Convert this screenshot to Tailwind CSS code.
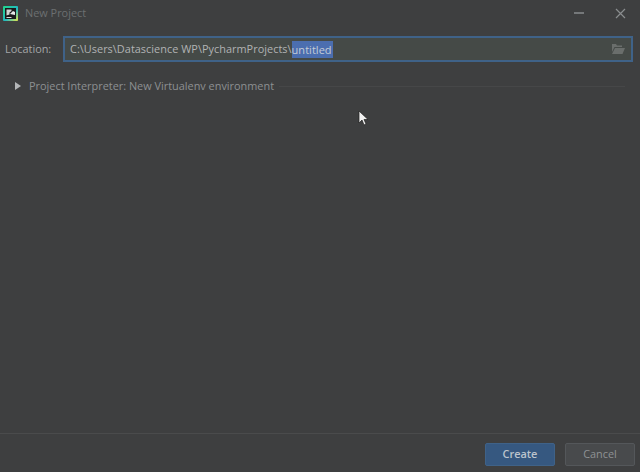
<!DOCTYPE html>
<html lang="en">
<head>
  <meta charset="UTF-8" />
  <title>New Project</title>
  <script src="https://cdn.jsdelivr.net/npm/@tailwindcss/browser@4"></script>
</head>
<body class="bg-[#3e3f40]">
  <div class="relative w-[640px] h-[472px] overflow-hidden flex flex-col bg-[#3e3f40] font-['Open_Sans','Liberation_Sans',sans-serif] text-[10.9px] text-[#a9abad]">

    <!-- title bar -->
    <div class="h-[26px] flex items-center shrink-0">
      <svg class="ml-[3px] mt-[1px] w-[15px] h-[15px]" viewBox="0 0 15 15">
        <defs>
          <linearGradient id="pc" x1="0" y1="0" x2="1" y2="1">
            <stop offset="0" stop-color="#21d789" />
            <stop offset="0.55" stop-color="#21b8c0" />
            <stop offset="1" stop-color="#e8e84a" />
          </linearGradient>
        </defs>
        <rect width="15" height="15" rx="1" fill="url(#pc)" />
        <rect x="2" y="2" width="11" height="11" fill="#1a1a1a" />
        <path d="M3.500 3.500h5v1.500l-2 1.500v2l-3 1z" fill="#cfd2d0" />
        <path d="M7 8l3-3 2 1v3z" fill="#e8e8e8" />
        <rect x="3.500" y="11" width="5" height="1" fill="#d8d8d8" />
      </svg>
      <span class="ml-[7px] text-[#6c6f71]">New Project</span>
      <div class="ml-auto flex items-center">
        <div class="w-[10px] h-[2px] bg-[#75787a] mr-[31px]"></div>
        <svg class="w-[11px] h-[11px] mr-[14px]" viewBox="0 0 11 11" fill="none" stroke="#8a8d8f" stroke-width="1.2">
          <path d="M1 1l9 9M10 1l-9 9" />
        </svg>
      </div>
    </div>

    <!-- location -->
    <div class="mt-[10px] flex items-center pl-[5px] pr-[7px] shrink-0">
      <span class="w-[58px] text-[#a4a6a8]">Location:</span>
      <div class="flex-1 h-[26px] flex items-center pl-[5px] pr-[6px] border-2 border-[#3f6288] bg-[#454a47] tracking-[0.03px]">
        <span class="text-[#b1b3b4]">C:\Users\Datascience WP\PycharmProjects\</span><span class="bg-[#4b6eaf] text-[#c4cbd6] leading-[17px] text-[11px] pr-px">untitled</span>
        <svg class="ml-auto w-[14px] h-[12px]" viewBox="0 0 14 12" fill="#6a6e6c">
          <path d="M1 1h4l1 1.500h5v1.500H3.500L1 9z" />
          <path d="M4 5h10l-2.500 6H1z" />
        </svg>
      </div>
    </div>

    <!-- interpreter -->
    <div class="mt-[16px] flex items-center pl-[15px] pr-[15px] h-[16px] shrink-0">
      <svg class="w-[6px] h-[8px]" viewBox="0 0 6 8" fill="#b4b6b8"><path d="M0 0l6 4-6 4z" /></svg>
      <span class="ml-[8px] text-[#8d9092] whitespace-nowrap">Project Interpreter: New Virtualenv environment</span>
      <div class="ml-[5px] flex-1 h-px bg-[#464748]"></div>
    </div>

    <div class="flex-1"></div>

    <!-- footer -->
    <div class="h-[39px] shrink-0 border-t border-[#4a4b4c] flex items-start justify-end pt-[9px] pr-[5px] gap-[10px]">
      <div class="w-[70px] h-[23px] flex items-center justify-center rounded-[2px] border border-[#3f6288] bg-[#365880] font-semibold text-[#bcc4cd]">Create</div>
      <div class="w-[70px] h-[23px] flex items-center justify-center rounded-[2px] border border-[#54575a] bg-[#484a4c] text-[#8f9294]">Cancel</div>
    </div>

    <!-- mouse pointer -->
    <svg class="absolute left-[358px] top-[110px] w-[10px] h-[16px]" viewBox="0 0 10 16">
      <path d="M1 1v12l3-3 2 5 2-1-2-4.500h4z" fill="#f2f2f2" stroke="#202020" stroke-width="0.7" />
    </svg>
  </div>
</body>
</html>
